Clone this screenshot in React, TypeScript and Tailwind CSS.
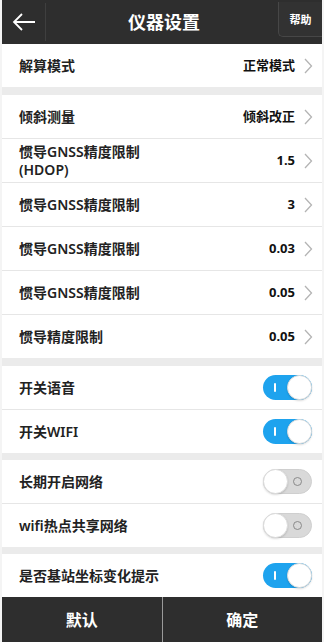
import React from 'react';

const font = { fontFamily: '"Noto Sans", "Noto Sans CJK SC", sans-serif' };

interface ValueRow {
    label: React.ReactNode;
    value: string;
    bold?: boolean;
}

function Chevron() {
    return (
        <svg width="9" height="16" viewBox="0 0 9 16" className="shrink-0 ml-[9px]" aria-hidden="true">
            <path d="M1 1 L7.5 8 L1 15" fill="none" stroke="#b4b4b4" strokeWidth="1.3" />
        </svg>
    );
}

function Row({ children, last }: { children: React.ReactNode; last?: boolean }) {
    return (
        <div className={`flex items-center pl-[17px] pr-[9px] bg-white ${last ? 'h-[43px]' : 'h-[44px] border-b border-[#e6e6e6]'}`}>
            {children}
        </div>
    );
}

function SettingRow({ item, last }: { item: ValueRow; last?: boolean }) {
    return (
        <Row last={last}>
            <div className="flex-1 text-[14px] leading-[18px] font-semibold text-[#222]">{item.label}</div>
            <span className={`text-[13px] text-[#111] ${item.bold ? 'font-bold' : 'font-semibold'}`}>{item.value}</span>
            <Chevron />
        </Row>
    );
}

function Toggle({ on }: { on: boolean }) {
    if (on) {
        return (
            <div className="relative w-[49px] h-[25px] rounded-full bg-[#1ea3ee] mr-[1px]">
                <span className="absolute left-[11px] top-[8px] w-[2px] h-[9px] bg-white rounded-sm" />
                <span className="absolute right-0 top-0 w-[25px] h-[25px] rounded-full bg-white border border-[#dcdcdc] shadow-[0_1px_2px_rgba(0,0,0,0.15)]" />
            </div>
        );
    }
    return (
        <div className="relative w-[49px] h-[25px] rounded-full bg-[#d9d9d9] border border-[#cfcfcf] mr-[1px]">
            <span className="absolute right-[9px] top-[7px] w-[9px] h-[9px] rounded-full border border-[#8a8a8a]" />
            <span className="absolute -left-px -top-px w-[25px] h-[25px] rounded-full bg-white border border-[#dcdcdc] shadow-[0_1px_2px_rgba(0,0,0,0.15)]" />
        </div>
    );
}

function ToggleRow({ label, on, last }: { label: string; on: boolean; last?: boolean }) {
    return (
        <Row last={last}>
            <div className="flex-1 text-[14px] font-semibold text-[#222]">{label}</div>
            <Toggle on={on} />
        </Row>
    );
}

const measureRows: ValueRow[] = [
    { label: '倾斜测量', value: '倾斜改正' },
    { label: <>惯导GNSS精度限制<br />(HDOP)</>, value: '1.5', bold: true },
    { label: '惯导GNSS精度限制', value: '3', bold: true },
    { label: '惯导GNSS精度限制', value: '0.03', bold: true },
    { label: '惯导GNSS精度限制', value: '0.05', bold: true },
    { label: '惯导精度限制', value: '0.05', bold: true },
];

export default function App() {
    return (
        <div className="w-[324px] h-[642px] bg-[#f4f4f4] px-[2px] flex flex-col overflow-hidden" style={font}>
            <header className="h-[44px] bg-[#2e2e2e] flex items-stretch shrink-0">
                <button className="w-[44px] flex items-center justify-center border-r border-[#3f3f3f] my-[3px]" aria-label="返回">
                    <svg width="24" height="18" viewBox="0 0 24 18" aria-hidden="true">
                        <path d="M23 9 H2 M10 1 L2 9 L10 17" fill="none" stroke="#fff" strokeWidth="1.8" />
                    </svg>
                </button>
                <h1 className="flex-1 flex items-center justify-center text-[18px] font-bold text-white pl-[4px]">仪器设置</h1>
                <div className="w-[44px] flex items-start">
                    <button className="mt-[2px] w-[44px] h-[35px] pt-[2px] bg-[#323232] border-l border-b border-[#474747] rounded-bl-[5px] text-[11px] font-bold text-white">
                        帮助
                    </button>
                </div>
            </header>

            <main className="flex-1 flex flex-col bg-[#ebebeb] min-h-0">
                <SettingRow item={{ label: '解算模式', value: '正常模式' }} last />
                <div className="h-[8px] shrink-0" />
                {measureRows.map((item, i) => (
                    <SettingRow key={i} item={item} last={i === measureRows.length - 1} />
                ))}
                <div className="h-[8px] shrink-0" />
                <ToggleRow label="开关语音" on />
                <ToggleRow label="开关WIFI" on last />
                <div className="h-[7px] shrink-0" />
                <ToggleRow label="长期开启网络" on={false} />
                <ToggleRow label="wifi热点共享网络" on={false} last />
                <div className="h-[7px] shrink-0" />
                <ToggleRow label="是否基站坐标变化提示" on last />
            </main>

            <footer className="h-[45px] bg-[#2e2e2e] flex shrink-0">
                <button className="flex-1 text-[16px] font-bold text-white border-r border-[#9a9a9a]">默认</button>
                <button className="flex-1 text-[16px] font-bold text-white">确定</button>
            </footer>
        </div>
    );
}
